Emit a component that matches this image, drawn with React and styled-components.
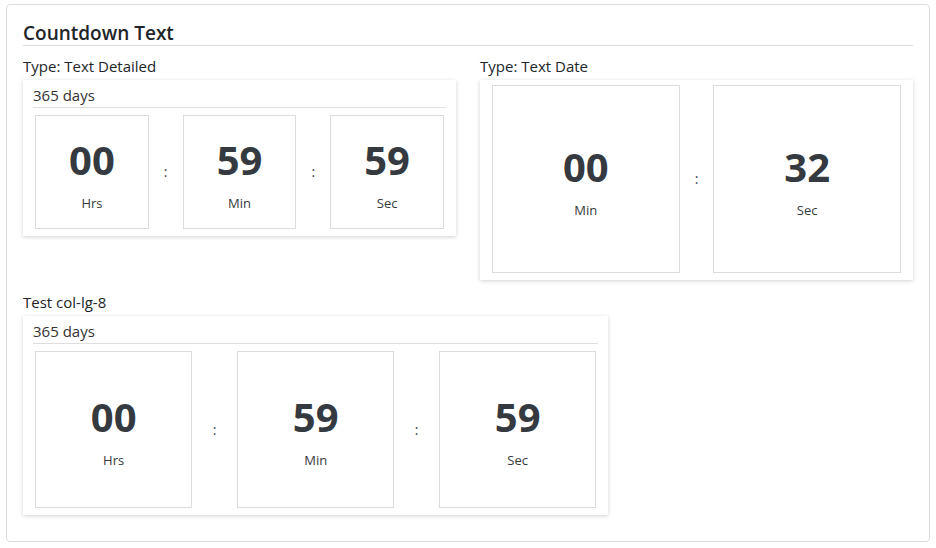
import React from "react";
import styled, { createGlobalStyle } from "styled-components";

const GlobalStyle = createGlobalStyle`
  html, body { margin: 0; padding: 0; background: #fff; }
  body {
    font-family: "Open Sans", "Noto Sans", sans-serif;
    color: #212529;
  }
  * { box-sizing: border-box; }
`;

const Panel = styled.div`
  margin: 4px 6px;
  border: 1px solid #dcdcdc;
  border-radius: 4px;
  padding: 16px 16px 16px;
`;

const Title = styled.h2`
  margin: 0;
  font-size: 19px;
  font-weight: 600;
  line-height: 24px;
  color: #212529;
  border-bottom: 1px solid #dedede;
`;

const Grid = styled.div`
  display: grid;
  grid-template-columns: repeat(12, 1fr);
  column-gap: 24px;
  row-gap: 11px;
  align-items: start;
  margin-top: 9px;
`;

const Section = styled.section`
  grid-column: span ${(p) => p.$span};
  padding-bottom: ${(p) => (p.$last ? "10px" : "0")};
`;

const SectionLabel = styled.div`
  font-size: 15px;
  line-height: 22px;
  color: #212529;
  margin-bottom: 3px;
`;

const Card = styled.div`
  background: #fff;
  box-shadow: 0 1px 4px rgba(0, 0, 0, 0.18);
  padding: 3px 10px 5px;
`;

const CardHeader = styled.div`
  font-size: 15px;
  line-height: 22px;
  padding: 1px 0 1px;
  color: #333;
  border-bottom: 1px solid #dedede;
  margin-bottom: 5px;
`;

const TimerRow = styled.div`
  display: flex;
  align-items: center;
`;

const Unit = styled.div`
  flex: 1 1 0;
  aspect-ratio: 1 / 1;
  margin: 2px;
  padding-top: 5px;
  border: 1px solid #dcdcdc;
  display: flex;
  flex-direction: column;
  align-items: center;
  justify-content: center;
`;

const Value = styled.div`
  font-size: 40px;
  font-weight: 700;
  line-height: 48px;
  color: #343a40;
`;

const Label = styled.div`
  font-size: 13px;
  line-height: 20px;
  margin-top: 9px;
  color: #343a40;
`;

const Colon = styled.div`
  flex: none;
  width: 7.2%;
  text-align: center;
  font-size: 14px;
  color: #3d4452;
`;

function Timer({ units }) {
  return (
    <TimerRow>
      {units.map((u, i) => (
        <React.Fragment key={u.label}>
          {i > 0 && <Colon>:</Colon>}
          <Unit>
            <Value>{u.value}</Value>
            <Label>{u.label}</Label>
          </Unit>
        </React.Fragment>
      ))}
    </TimerRow>
  );
}

const hms = [
  { value: "00", label: "Hrs" },
  { value: "59", label: "Min" },
  { value: "59", label: "Sec" },
];

const ms = [
  { value: "00", label: "Min" },
  { value: "32", label: "Sec" },
];

export default function App() {
  return (
    <>
      <GlobalStyle />
      <Panel>
        <Title>Countdown Text</Title>
        <Grid>
          <Section $span={6}>
            <SectionLabel>Type: Text Detailed</SectionLabel>
            <Card>
              <CardHeader>365 days</CardHeader>
              <Timer units={hms} />
            </Card>
          </Section>
          <Section $span={6}>
            <SectionLabel>Type: Text Date</SectionLabel>
            <Card>
              <Timer units={ms} />
            </Card>
          </Section>
          <Section $span={8} $last>
            <SectionLabel>Test col-lg-8</SectionLabel>
            <Card>
              <CardHeader>365 days</CardHeader>
              <Timer units={hms} />
            </Card>
          </Section>
        </Grid>
      </Panel>
    </>
  );
}
